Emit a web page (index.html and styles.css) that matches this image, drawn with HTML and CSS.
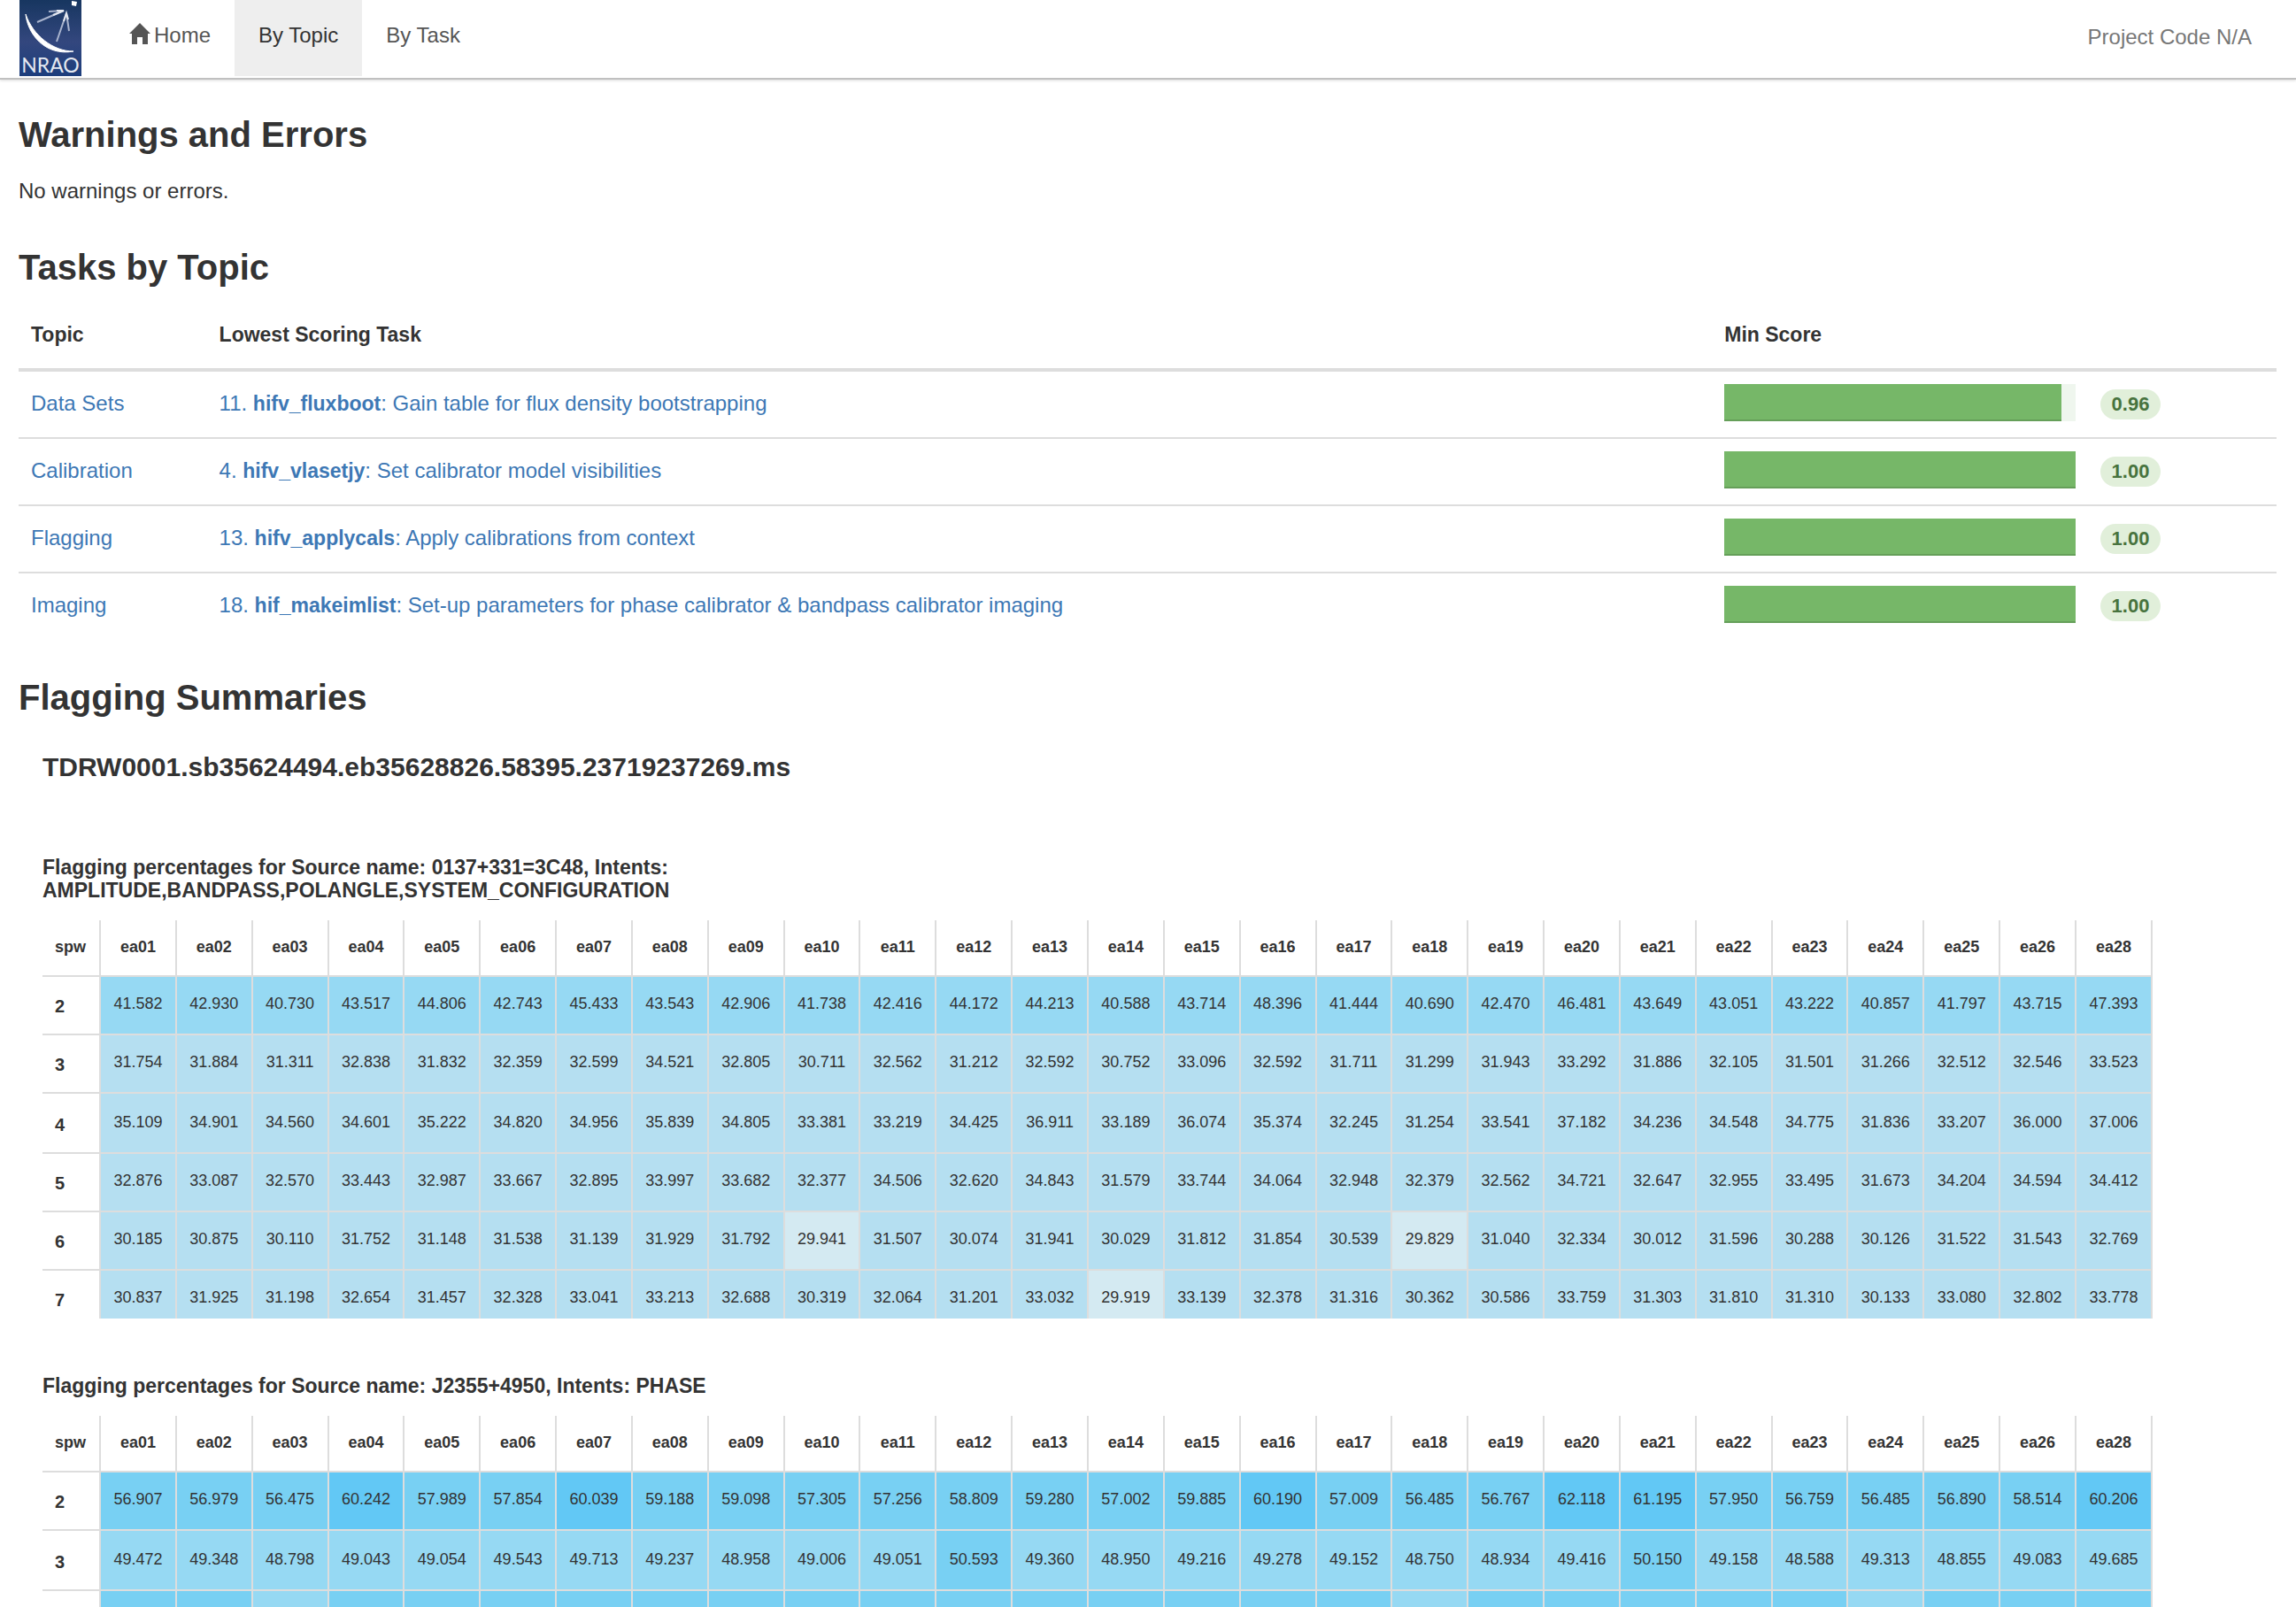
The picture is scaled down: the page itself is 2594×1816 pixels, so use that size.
FILE: index.html
```html
<!DOCTYPE html>
<html lang="en">
<head>
<meta charset="utf-8">
<title>Tasks by Topic</title>
<link rel="stylesheet" href="styles.css">
</head>
<body>
<header class="navbar">
  <a class="logo" href="#" aria-label="NRAO">
    <svg width="70" height="86" viewBox="0 0 70 86">
      <defs><linearGradient id="sky" x1="0" y1="0" x2="0" y2="1"><stop offset="0" stop-color="#173660"/><stop offset=".55" stop-color="#33477e"/><stop offset="1" stop-color="#1c3d7c"/></linearGradient></defs>
      <rect width="70" height="86" fill="url(#sky)"/>
      <path d="M7 16C9 38 29 64 61 58C38 58 15 40 7 16Z" fill="#fff" stroke="#fff" stroke-width="1"/>
      <path d="M20 25L50 12L33 13M42 47L53 15L56 35" fill="none" stroke="#a9b4ce" stroke-width="2"/>
      <path d="M38 17L50 12L42 12M50 24L53 15L55 22" fill="none" stroke="#e4e8f0" stroke-width="2"/>
      <path d="M59 1L65 2L64 7L59 6Z" fill="#fff"/>
      <text x="35" y="82" text-anchor="middle" class="logo-text">NRAO</text>
    </svg>
  </a>
  <nav class="nav">
    <a href="#"><svg class="home-icon" width="24" height="24" viewBox="0 0 24 24"><path d="M12 0L24 12H21V24H15V16H9V24H3V12H0Z" fill="currentColor"/></svg>Home</a>
    <a href="#" class="active">By Topic</a>
    <a href="#">By Task</a>
  </nav>
  <p class="project">Project Code N/A</p>
</header>
<main class="page">
  <h2>Warnings and Errors</h2>
  <p class="note">No warnings or errors.</p>
  <h2>Tasks by Topic</h2>
  <table class="topics">
    <thead><tr><th class="col-topic">Topic</th><th class="col-task">Lowest Scoring Task</th><th class="col-score">Min Score</th></tr></thead>
    <tbody>
      <tr><td><a href="#">Data Sets</a></td><td><a href="#">11. <strong>hifv_fluxboot</strong>: Gain table for flux density bootstrapping</a></td><td class="score-cell"><div class="score"><div class="bar"><div class="fill" style="width:96%"></div></div><span class="badge">0.96</span></div></td></tr>
      <tr><td><a href="#">Calibration</a></td><td><a href="#">4. <strong>hifv_vlasetjy</strong>: Set calibrator model visibilities</a></td><td class="score-cell"><div class="score"><div class="bar"><div class="fill" style="width:100%"></div></div><span class="badge">1.00</span></div></td></tr>
      <tr><td><a href="#">Flagging</a></td><td><a href="#">13. <strong>hifv_applycals</strong>: Apply calibrations from context</a></td><td class="score-cell"><div class="score"><div class="bar"><div class="fill" style="width:100%"></div></div><span class="badge">1.00</span></div></td></tr>
      <tr><td><a href="#">Imaging</a></td><td><a href="#">18. <strong>hif_makeimlist</strong>: Set-up parameters for phase calibrator &amp; bandpass calibrator imaging</a></td><td class="score-cell"><div class="score"><div class="bar"><div class="fill" style="width:100%"></div></div><span class="badge">1.00</span></div></td></tr>
    </tbody>
  </table>
  <h2>Flagging Summaries</h2>
  <section class="summary">
    <h4>TDRW0001.sb35624494.eb35628826.58395.23719237269.ms</h4>
    <h5>Flagging percentages for Source name: 0137+331=3C48, Intents: AMPLITUDE,BANDPASS,POLANGLE,SYSTEM_CONFIGURATION</h5>
    <div class="heat-box">
      <table class="heat">
        <thead><tr><th class="spw">spw<th>ea01<th>ea02<th>ea03<th>ea04<th>ea05<th>ea06<th>ea07<th>ea08<th>ea09<th>ea10<th>ea11<th>ea12<th>ea13<th>ea14<th>ea15<th>ea16<th>ea17<th>ea18<th>ea19<th>ea20<th>ea21<th>ea22<th>ea23<th>ea24<th>ea25<th>ea26<th>ea28</tr></thead>
        <tbody>
        <tr class="p40"><th>2<td>41.582<td>42.930<td>40.730<td>43.517<td>44.806<td>42.743<td>45.433<td>43.543<td>42.906<td>41.738<td>42.416<td>44.172<td>44.213<td>40.588<td>43.714<td>48.396<td>41.444<td>40.690<td>42.470<td>46.481<td>43.649<td>43.051<td>43.222<td>40.857<td>41.797<td>43.715<td>47.393</tr>
        <tr class="p30"><th>3<td>31.754<td>31.884<td>31.311<td>32.838<td>31.832<td>32.359<td>32.599<td>34.521<td>32.805<td>30.711<td>32.562<td>31.212<td>32.592<td>30.752<td>33.096<td>32.592<td>31.711<td>31.299<td>31.943<td>33.292<td>31.886<td>32.105<td>31.501<td>31.266<td>32.512<td>32.546<td>33.523</tr>
        <tr class="p30 roomy"><th>4<td>35.109<td>34.901<td>34.560<td>34.601<td>35.222<td>34.820<td>34.956<td>35.839<td>34.805<td>33.381<td>33.219<td>34.425<td>36.911<td>33.189<td>36.074<td>35.374<td>32.245<td>31.254<td>33.541<td>37.182<td>34.236<td>34.548<td>34.775<td>31.836<td>33.207<td>36.000<td>37.006</tr>
        <tr class="p30"><th>5<td>32.876<td>33.087<td>32.570<td>33.443<td>32.987<td>33.667<td>32.895<td>33.997<td>33.682<td>32.377<td>34.506<td>32.620<td>34.843<td>31.579<td>33.744<td>34.064<td>32.948<td>32.379<td>32.562<td>34.721<td>32.647<td>32.955<td>33.495<td>31.673<td>34.204<td>34.594<td>34.412</tr>
        <tr class="p30"><th>6<td>30.185<td>30.875<td>30.110<td>31.752<td>31.148<td>31.538<td>31.139<td>31.929<td>31.792<td class="p20">29.941<td>31.507<td>30.074<td>31.941<td>30.029<td>31.812<td>31.854<td>30.539<td class="p20">29.829<td>31.040<td>32.334<td>30.012<td>31.596<td>30.288<td>30.126<td>31.522<td>31.543<td>32.769</tr>
        <tr class="p30"><th>7<td>30.837<td>31.925<td>31.198<td>32.654<td>31.457<td>32.328<td>33.041<td>33.213<td>32.688<td>30.319<td>32.064<td>31.201<td>33.032<td class="p20">29.919<td>33.139<td>32.378<td>31.316<td>30.362<td>30.586<td>33.759<td>31.303<td>31.810<td>31.310<td>30.133<td>33.080<td>32.802<td>33.778</tr>
        </tbody>
      </table>
    </div>
    <h5>Flagging percentages for Source name: J2355+4950, Intents: PHASE</h5>
    <div class="heat-box">
      <table class="heat">
        <thead><tr><th class="spw">spw<th>ea01<th>ea02<th>ea03<th>ea04<th>ea05<th>ea06<th>ea07<th>ea08<th>ea09<th>ea10<th>ea11<th>ea12<th>ea13<th>ea14<th>ea15<th>ea16<th>ea17<th>ea18<th>ea19<th>ea20<th>ea21<th>ea22<th>ea23<th>ea24<th>ea25<th>ea26<th>ea28</tr></thead>
        <tbody>
        <tr class="p50"><th>2<td>56.907<td>56.979<td>56.475<td class="p60">60.242<td>57.989<td>57.854<td class="p60">60.039<td>59.188<td>59.098<td>57.305<td>57.256<td>58.809<td>59.280<td>57.002<td>59.885<td class="p60">60.190<td>57.009<td>56.485<td>56.767<td class="p60">62.118<td class="p60">61.195<td>57.950<td>56.759<td>56.485<td>56.890<td>58.514<td class="p60">60.206</tr>
        <tr class="p40 roomy"><th>3<td>49.472<td>49.348<td>48.798<td>49.043<td>49.054<td>49.543<td>49.713<td>49.237<td>48.958<td>49.006<td>49.051<td class="p50">50.593<td>49.360<td>48.950<td>49.216<td>49.278<td>49.152<td>48.750<td>48.934<td>49.416<td class="p50">50.150<td>49.158<td>48.588<td>49.313<td>48.855<td>49.083<td>49.685</tr>
        <tr class="p50"><th><td><td><td class="p40"><td><td><td><td><td><td><td><td><td><td><td><td><td><td><td class="p40"><td><td><td><td><td><td class="p40"><td><td><td></tr>
        </tbody>
      </table>
    </div>
  </section>
</main>
</body>
</html>
```
FILE: styles.css
```css
* { box-sizing: border-box; }

body {
  display: flex;
  flex-direction: column;
  height: 100vh;
  margin: 0;
  overflow: hidden;
  background: #fff;
  color: #333;
  font: 24px/34px "Liberation Sans", Arial, sans-serif;
}

a { color: #3d78b5; text-decoration: none; }

.navbar {
  display: flex;
  flex: none;
  align-items: flex-start;
  height: 90px;
  padding: 0 50px 0 22px;
  border-bottom: 2px solid #c0c0c0;
  box-shadow: 0 1px 3px rgba(0, 0, 0, .15);
}
.logo { display: block; height: 86px; margin-right: 27px; }
.logo svg { display: block; }
.logo-text { fill: #e4e8f0; font: 23px/24px Lato, sans-serif; }
.nav { display: flex; }
.nav a {
  display: flex;
  padding: 23px 27px 29px;
  color: #555;
}
.nav .active { background: #eee; color: #333; }
.home-icon { margin: 3px 4px 0 0; }
.project { margin: 25px 0 0 auto; color: #777; }

.page { padding: 40px 22px 0 21px; }
h2 { margin: 44px 0 18px; font-size: 40px; line-height: 44px; }
.page > h2:first-child { margin-top: 0; }
.note { margin: 25px 0 47px; }

.topics { width: 100%; border-spacing: 0; table-layout: fixed; }
.topics th, .topics td {
  padding: 19px 14px 21px;
  text-align: left;
  vertical-align: top;
}
.topics th { border-bottom: 4px solid #ddd; font-size: 23px; }
.topics strong { font-size: 23px; }
.topics tr + tr td { border-top: 2px solid #ddd; }
.col-topic { width: 8.3333%; }
.col-score { width: 25%; }
.topics .score-cell { padding: 14px 14px 18px; }
.score { display: flex; align-items: flex-start; gap: 28px; }
.bar { flex: 0 0 65%; height: 42px; background: #eff6ee; }
.fill { height: 100%; background: #76b768; border-bottom: 2px solid #659f59; }
.badge {
  margin-top: 6px;
  padding: 0 13px;
  border-radius: 17px;
  background: #e1efda;
  color: #47733e;
  font-size: 22px;
  font-weight: bold;
}

.summary { padding-left: 27px; }
h4 { margin: 40px 0 83px; font-size: 30px; line-height: 34px; }
h5 { max-width: 50%; margin: 63px 0 21px; font-size: 23px; line-height: 26px; }

.heat-box { max-height: 450px; overflow: hidden; }
.heat {
  width: 94.45%;
  border-spacing: 0;
  border-right: 2px solid #ddd;
  table-layout: fixed;
  font-size: 18px;
  line-height: 26px;
}
.heat th, .heat td {
  height: 66px;
  padding: 17px 0 21px;
  border-bottom: 2px solid #ddd;
  border-left: 2px solid #ddd;
  text-align: center;
  vertical-align: top;
}
.heat thead th { height: 64px; padding-bottom: 19px; }
.heat .spw { width: 64px; }
.heat .spw, .heat tbody th { padding-left: 14px; border-left: 0; text-align: left; }
.heat tbody th { padding-top: 20px; padding-bottom: 18px; font-size: 20px; }
.heat .roomy td { padding-top: 19px; }
.heat .roomy th { padding-top: 22px; }

.p20 td, td.p20 { background: #d4eaf2; }
.p30 td:not([class]) { background: #b5dff1; }
.p40 td:not([class]), td.p40 { background: #96d9f3; }
.p50 td:not([class]), td.p50 { background: #78d0f3; }
td.p60 { background: #62c8f5; }
```
